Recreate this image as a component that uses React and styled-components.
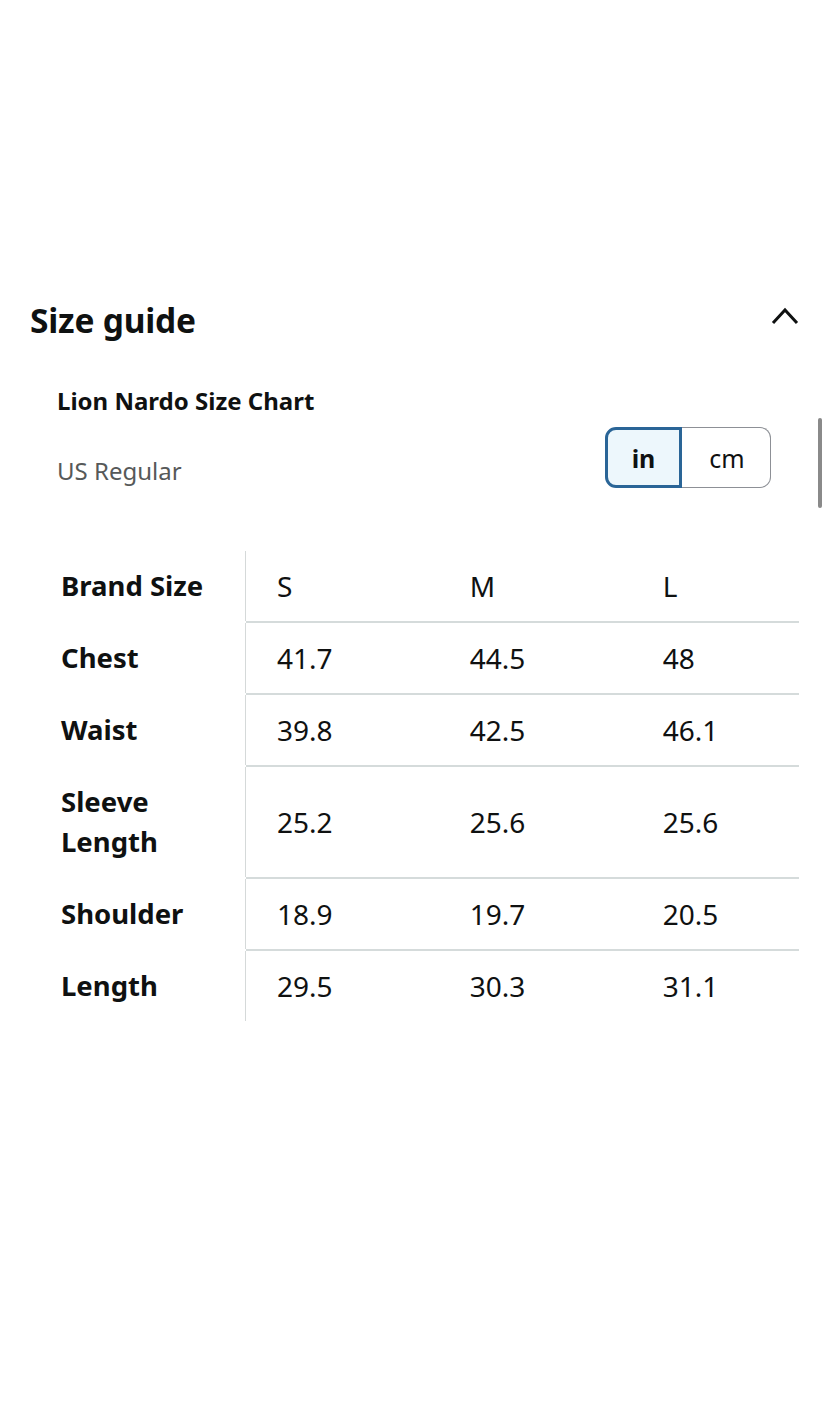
import React from "react";
import styled, { createGlobalStyle } from "styled-components";

const GlobalStyle = createGlobalStyle`
  html, body {
    margin: 0;
    padding: 0;
    background: #ffffff;
  }
  body {
    font-family: "Noto Sans", "Open Sans", sans-serif;
    color: #0f1111;
  }
`;

const Page = styled.div`
  position: relative;
  width: 828px;
  height: 1402px;
  overflow: hidden;
  background: #fff;
`;

const Section = styled.section`
  padding: 292px 28px 0 30px;
`;

const Header = styled.div`
  display: flex;
  justify-content: space-between;
  align-items: center;
  height: 56px;
`;

const Title = styled.h2`
  margin: 0;
  font-size: 33.5px;
  font-weight: 700;
  letter-spacing: -0.2px;
`;

const Chevron = styled.button`
  border: 0;
  background: none;
  padding: 0;
  margin-bottom: 8px;
  width: 30px;
  height: 24px;
  display: flex;
  align-items: center;
  justify-content: center;
`;

const Body = styled.div`
  padding: 37px 0 0 27px;
`;

const ChartName = styled.div`
  font-size: 24px;
  font-weight: 700;
  line-height: 32px;
`;

const Row = styled.div`
  display: flex;
  justify-content: space-between;
  align-items: flex-start;
  margin-top: 10px;
`;

const Fit = styled.div`
  font-size: 24px;
  line-height: 32px;
  color: #565959;
  padding-top: 28px;
`;

const Toggle = styled.div`
  display: flex;
  height: 61px;
  margin-right: 29px;
`;

const Unit = styled.button`
  width: ${(p) => (p.$active ? "77px" : "89px")};
  font-family: inherit;
  font-size: 25px;
  font-weight: ${(p) => (p.$active ? 700 : 400)};
  color: #0f1111;
  background: ${(p) => (p.$active ? "#edf7fc" : "#ffffff")};
  border: ${(p) => (p.$active ? "3.5px solid #2a6597" : "1.5px solid #8d9096")};
  border-left-width: ${(p) => (p.$active ? "3.5px" : "0")};
  border-radius: ${(p) => (p.$active ? "11px 0 0 11px" : "0 11px 11px 0")};
  padding: 0;
  padding-left: ${(p) => (p.$active ? "0" : "2px")};
`;

const TableWrap = styled.div`
  margin-top: 63px;
  margin-left: -12px;
  width: 754px;
  overflow: hidden;
`;

const Table = styled.table`
  border-collapse: collapse;
  table-layout: fixed;
  width: 780px;
`;

const Label = styled.th`
  width: 184px;
  padding: 15px 0 15px 16px;
  text-align: left;
  font-size: 27.5px;
  font-weight: 700;
  line-height: 40px;
  border-right: 1.5px solid #d5d9d9;
  border-bottom: 2px solid transparent;
  vertical-align: middle;
`;

const Cell = styled.td`
  padding: 15px 0 15px 31px;
  font-size: 28px;
  line-height: 40px;
  border-bottom: 2px solid ${(p) => (p.$last ? "transparent" : "#d5dbdb")};
  vertical-align: middle;
`;

const Scrollbar = styled.div`
  position: absolute;
  right: 6px;
  top: 418px;
  width: 4px;
  height: 90px;
  border-radius: 2px;
  background: #8a8a8a;
`;

const rows = [
  ["Brand Size", ["S", "M", "L"]],
  ["Chest", ["41.7", "44.5", "48"]],
  ["Waist", ["39.8", "42.5", "46.1"]],
  ["Sleeve Length", ["25.2", "25.6", "25.6"]],
  ["Shoulder", ["18.9", "19.7", "20.5"]],
  ["Length", ["29.5", "30.3", "31.1"]],
];

export default function App() {
  return (
    <Page>
      <GlobalStyle />
      <Section>
        <Header>
          <Title>Size guide</Title>
          <Chevron aria-label="Collapse">
            <svg width="28" height="20" viewBox="0 0 28 20">
              <polyline
                points="2,17 14,4 26,17"
                fill="none"
                stroke="#0f1111"
                strokeWidth="3"
              />
            </svg>
          </Chevron>
        </Header>
        <Body>
          <ChartName>Lion Nardo Size Chart</ChartName>
          <Row>
            <Fit>US Regular</Fit>
            <Toggle>
              <Unit $active>in</Unit>
              <Unit>cm</Unit>
            </Toggle>
          </Row>
          <TableWrap>
            <Table>
              <tbody>
                {rows.map(([label, vals], i) => (
                  <tr key={label}>
                    <Label>
                      {label === "Sleeve Length" ? (
                        <>
                          Sleeve
                          <br />
                          Length
                        </>
                      ) : (
                        label
                      )}
                    </Label>
                    {vals.map((v, j) => (
                      <Cell key={j} $last={i === rows.length - 1}>
                        {v}
                      </Cell>
                    ))}
                  </tr>
                ))}
              </tbody>
            </Table>
          </TableWrap>
        </Body>
      </Section>
      <Scrollbar />
    </Page>
  );
}
